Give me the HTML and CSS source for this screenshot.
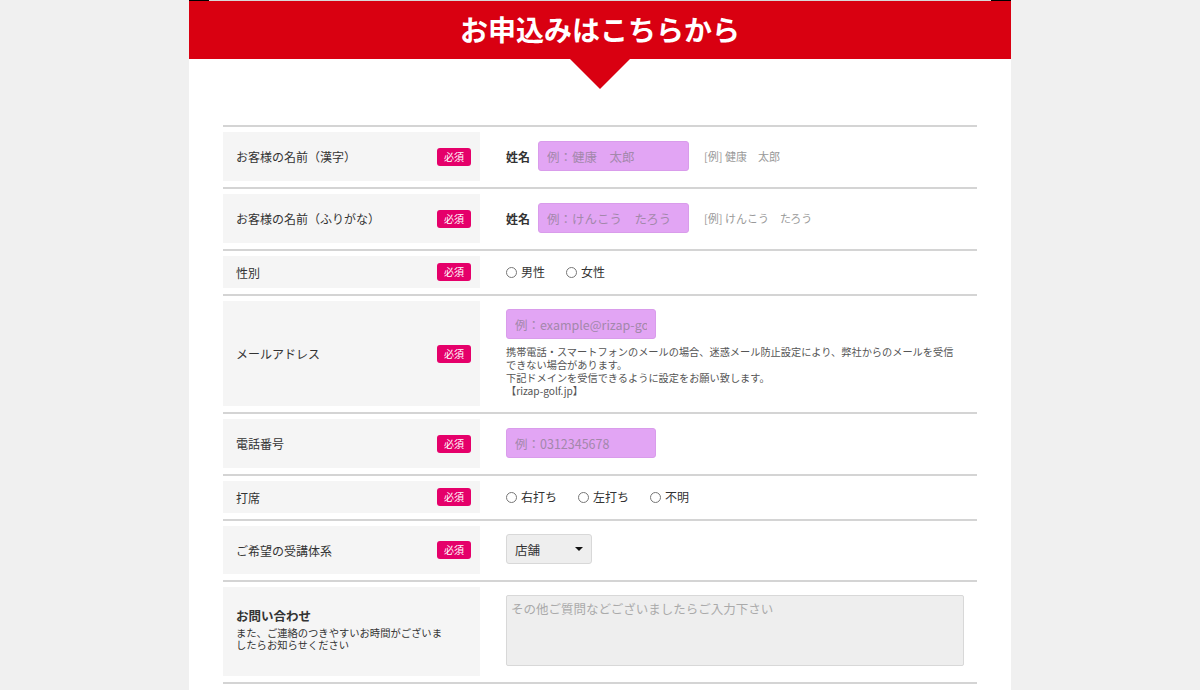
FILE: index.html
```html
<!DOCTYPE html>
<html lang="ja">
<head>
    <meta charset="UTF-8">
    <meta name="viewport" content="width=device-width, initial-scale=1.0">
    <link rel="stylesheet" href="styles.css">
</head>
<body>

<div class="page">
    <div class="topline"><span class="mark"></span><span class="mark"></span></div>
    <div class="head">
        <h1>お申込みはこちらから</h1>
    </div>

    <form class="form">
        <div class="row">
            <div class="label"><span>お客様の名前（漢字）</span><span class="req">必須</span></div>
            <div class="field input">
                <span class="sub">姓名</span>
                <input class="text name" type="text" placeholder="例：健康　太郎">
                <span class="hint">[例] 健康　太郎</span>
            </div>
        </div>

        <div class="row">
            <div class="label"><span>お客様の名前（ふりがな）</span><span class="req">必須</span></div>
            <div class="field input">
                <span class="sub">姓名</span>
                <input class="text name" type="text" placeholder="例：けんこう　たろう">
                <span class="hint">[例] けんこう　たろう</span>
            </div>
        </div>

        <div class="row">
            <div class="label"><span>性別</span><span class="req">必須</span></div>
            <div class="field radios">
                <label><input type="radio" name="sex">男性</label>
                <label><input type="radio" name="sex">女性</label>
            </div>
        </div>

        <div class="row">
            <div class="label"><span>メールアドレス</span><span class="req">必須</span></div>
            <div class="field column">
                <input class="text" type="text" placeholder="例：example@rizap-golf.jp">
                <p class="note">携帯電話・スマートフォンのメールの場合、迷惑メール防止設定により、弊社からのメールを受信<br>できない場合があります。<br>下記ドメインを受信できるように設定をお願い致します。<br>【rizap-golf.jp】</p>
            </div>
        </div>

        <div class="row">
            <div class="label"><span>電話番号</span><span class="req">必須</span></div>
            <div class="field input">
                <input class="text" type="text" placeholder="例：0312345678">
            </div>
        </div>

        <div class="row">
            <div class="label"><span>打席</span><span class="req">必須</span></div>
            <div class="field radios">
                <label><input type="radio" name="side">右打ち</label>
                <label><input type="radio" name="side">左打ち</label>
                <label><input type="radio" name="side">不明</label>
            </div>
        </div>

        <div class="row">
            <div class="label"><span>ご希望の受講体系</span><span class="req">必須</span></div>
            <div class="field">
                <span class="select">
                    <select>
                        <option>店舗</option>
                    </select>
                </span>
            </div>
        </div>

        <div class="row last">
            <div class="label stack">
                <strong>お問い合わせ</strong>
                <small>また、ご連絡のつきやすいお時間がございま<br>したらお知らせください</small>
            </div>
            <div class="field top">
                <textarea placeholder="その他ご質問などございましたらご入力下さい"></textarea>
            </div>
        </div>
    </form>
</div>

</body>
</html>
```

FILE: styles.css
```css
body {
    margin: 0;
    background: #f0f0f0;
    font-family: "Noto Sans CJK JP", "Noto Sans", sans-serif;
    color: #333;
}

.page {
    width: 822px;
    min-height: 690px;
    margin: 0 auto;
    background: #fff;
}

.topline {
    height: 1px;
    background: #d8d8d8;
    display: flex;
    justify-content: space-between;
}

.topline .mark {
    width: 20px;
    background: #000;
}

.head {
    position: relative;
    height: 58px;
    background: #d90011;
    display: flex;
    align-items: center;
    justify-content: center;
}

/* arrow under the banner */
.head::after {
    content: "";
    position: absolute;
    left: 381px;
    top: 58px;
    border-left: 30px solid transparent;
    border-right: 30px solid transparent;
    border-top: 30px solid #d90011;
}

.head h1 {
    margin: 0 0 3px;
    color: #fff;
    font-size: 28px;
    font-weight: bold;
}

.form {
    margin: 66px 34px 0;
}

.row {
    display: flex;
    border-top: 2px solid #d4d4d4;
    padding: 5px 0 6px;
}

.row.last {
    border-bottom: 2px solid #d4d4d4;
}

.label {
    width: 257px;
    box-sizing: border-box;
    flex-shrink: 0;
    background: #f5f5f5;
    display: flex;
    align-items: center;
    justify-content: space-between;
    padding: 0 9px 0 13px;
    font-size: 12px;
}

.req {
    width: 34px;
    height: 18px;
    line-height: 18px;
    text-align: center;
    background: #e5006a;
    color: #fff;
    font-size: 10px;
    border-radius: 3px;
}

.label.stack {
    flex-direction: column;
    align-items: flex-start;
    justify-content: center;
    padding-bottom: 5px;
}

.label.stack strong {
    font-size: 12.5px;
    line-height: 16px;
    margin-bottom: 3px;
}

.label.stack small {
    font-size: 10.3px;
    line-height: 12px;
}

.field {
    display: flex;
    align-items: center;
    padding: 8px 20px 10px 26px;
    font-size: 12px;
}

.field.input {
    padding-top: 9px;
}

.field.column {
    flex-direction: column;
    align-items: flex-start;
    padding-bottom: 9px;
}

.field.top {
    align-items: flex-start;
    padding: 8px 13px 10px 26px;
    flex: 1;
}

.sub {
    font-weight: bold;
    margin-right: 8px;
}

.text {
    width: 150px;
    height: 30px;
    box-sizing: border-box;
    background: #e2a5f4;
    border: 1px solid #d99ceb;
    border-radius: 3px;
    padding: 0 8px;
    font-family: inherit;
    font-size: 12.5px;
    color: #333;
    outline: none;
}

.text.name {
    width: 151px;
}

.text::placeholder {
    color: #a388ab;
}

.hint {
    margin-left: 15px;
    color: #999;
    font-size: 11px;
}

.note {
    margin: 6px 0 0;
    font-size: 10.2px;
    line-height: 13px;
    color: #555;
    white-space: nowrap;
}

.radios {
    gap: 21px;
    padding-bottom: 8px;
    line-height: 16px;
}

.radios label {
    display: flex;
    align-items: center;
}

.radios input {
    appearance: none;
    width: 11px;
    height: 11px;
    margin: 0 4px 0 0;
    border: 1px solid #777;
    border-radius: 50%;
    background: #fff;
}

.select {
    position: relative;
    display: inline-block;
    height: 30px;
}

.select select {
    appearance: none;
    width: 86px;
    height: 30px;
    background: #eee;
    border: 1px solid #d8d8d8;
    border-radius: 3px;
    padding: 0 8px;
    font-family: inherit;
    font-size: 12.5px;
    color: #333;
}

.select::after {
    content: "";
    position: absolute;
    right: 9px;
    top: 13px;
    border-left: 4px solid transparent;
    border-right: 4px solid transparent;
    border-top: 4px solid #111;
    pointer-events: none;
}

textarea {
    display: block;
    width: 100%;
    height: 71px;
    box-sizing: border-box;
    background: #eee;
    border: 1px solid #d8d8d8;
    border-radius: 2px;
    padding: 3px 4px;
    font-family: inherit;
    font-size: 12.5px;
    resize: none;
}

textarea::placeholder {
    color: #aaa;
}
```
